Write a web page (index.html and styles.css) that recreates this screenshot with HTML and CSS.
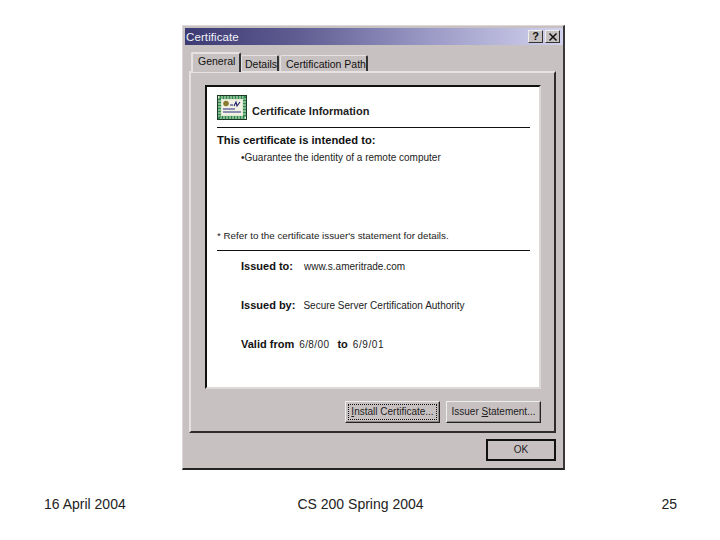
FILE: index.html
```html
<!DOCTYPE html>
<html lang="en">
<head>
<meta charset="utf-8">
<title>Certificate</title>
<link rel="stylesheet" href="styles.css">
</head>
<body>
<main class="slide">
  <section class="window">
    <header class="titlebar">
      <span class="title">Certificate</span>
      <span class="caption-buttons">
        <span class="caption-btn">?</span>
        <span class="caption-btn close">
          <svg viewBox="0 0 10 10" width="10" height="10"><path d="M1.5 1.5 8.5 8.5M8.5 1.5 1.5 8.5" stroke="#111" stroke-width="1.5" fill="none"/></svg>
        </span>
      </span>
    </header>
    <div class="tabs">
      <span class="tab active">General</span>
      <span class="tab details">Details</span>
      <span class="tab path">Certification Path</span>
    </div>
    <div class="panel">
      <div class="cert">
        <div class="cert-head">
          <svg class="cert-icon" viewBox="0 0 30 25" width="30" height="25">
            <rect x="0.5" y="0.5" width="29" height="24" fill="#dfe8d0" stroke="#1d3a26"/>
            <rect x="2.5" y="2.5" width="25" height="20" fill="none" stroke="#2f8a50" stroke-width="3" stroke-dasharray="2 1"/>
            <rect x="5" y="5" width="20" height="15" fill="#f1f2e4"/>
            <circle cx="9" cy="8.5" r="2.8" fill="#8a7a30"/>
            <path d="M13 10h3M17 11l2-4 1 4 3-4" stroke="#20206a" stroke-width="1.1" fill="none"/>
            <path d="M6 14h12M6 17h18" stroke="#2b2b80" stroke-width="1.1" fill="none"/>
          </svg>
          <span class="cert-title">Certificate Information</span>
        </div>
        <hr class="rule">
        <p class="intended">This certificate is intended to:</p>
        <p class="purpose"><span class="bullet">•</span>Guarantee the identity of a remote computer</p>
        <p class="note">* Refer to the certificate issuer's statement for details.</p>
        <hr class="rule rule-lower">
        <dl class="fields">
          <div class="field"><dt class="label">Issued to:</dt><dd class="value to">www.s.ameritrade.com</dd></div>
          <div class="field"><dt class="label">Issued by:</dt><dd class="value by">Secure Server Certification Authority</dd></div>
          <div class="field"><dt class="label">Valid from</dt><dd class="value from">6/8/00</dd><dt class="label until">to</dt><dd class="value until-date">6/9/01</dd></div>
        </dl>
      </div>
      <div class="panel-actions">
        <button class="btn focused" type="button"><span class="focus"><u>I</u>nstall Certificate...</span></button>
        <button class="btn" type="button">Issuer <u>S</u>tatement...</button>
      </div>
    </div>
    <div class="dialog-actions">
      <button class="btn ok" type="button">OK</button>
    </div>
  </section>
  <footer class="slide-footer">
    <span>16 April 2004</span>
    <span class="center">CS 200 Spring 2004</span>
    <span class="end">25</span>
  </footer>
</main>
</body>
</html>
```

FILE: styles.css
```css
* { box-sizing: border-box; }
html, body { margin: 0; padding: 0; background: #fff; }
body { font-family: "Liberation Sans", Arial, sans-serif; color: #111; }
.slide { width: 720px; height: 540px; display: flex; flex-direction: column; overflow: hidden; }

.window {
  width: 383px; height: 445px; margin: 25px 0 0 182px; padding: 2px 0 0 2px;
  background: #c8c1c1;
  border-top: 1px solid #dcd8d8; border-left: 1px solid #dcd8d8;
  border-right: 2px solid #3a3838; border-bottom: 2px solid #222;
  display: flex; flex-direction: column;
  font-size: 10.5px;
}
.titlebar {
  height: 17px; flex: none; display: flex; align-items: center; justify-content: space-between;
  padding: 0 2px 0 1px;
  background: linear-gradient(90deg, #3c3a72 0%, #5f5d92 30%, #9c9ac6 65%, #d2d2ee 100%);
}
.title { color: #f2f2f6; font-size: 11.5px; font-weight: 400; letter-spacing: .1px; }
.caption-buttons { display: flex; gap: 2px; margin-right: 1px; }
.caption-btn {
  width: 15px; height: 13px; display: flex; align-items: center; justify-content: center;
  background: #c8c1c1; font-size: 11px; font-weight: 700; line-height: 1;
  border: 1px solid; border-color: #eee #333 #333 #eee;
}

.tabs { display: flex; align-items: flex-end; height: 26px; padding-left: 5px; flex: none; position: relative; z-index: 1; }
.tab {
  height: 16px; padding: 2px 4px 0; margin-left: 1px;
  border-top: 1px solid #e6e2e2; border-left: 1px solid #e6e2e2; border-right: 2px solid #333;
  border-radius: 2px 2px 0 0; line-height: 13px; white-space: nowrap;
}
.tab.active { height: 20px; width: 50px; margin: 0 0 -1px 1px; padding: 1px 0 0 5px; background: #c8c1c1; border-top-width: 2px; border-left-width: 2px; }
.tab.details { width: 38px; padding-left: 3px; margin-left: 0; }
.tab.path { width: 88px; padding-left: 5px; }

.panel {
  margin-left: 4px; width: 367px; height: 362px; flex: none; padding: 12px 14px 0 14px;
  border-top: 2px solid #e6e2e2; border-left: 2px solid #e6e2e2;
  border-right: 2px solid #2e2c2c; border-bottom: 2px solid #2e2c2c;
  display: flex; flex-direction: column;
}
.cert {
  width: 336px; height: 304px; flex: none; background: #fff; padding: 8px 10px 0 10px;
  border-top: 2px solid #111; border-left: 2px solid #111;
  border-right: 2px solid #dcd8d8; border-bottom: 2px solid #dcd8d8;
}
.cert-head { display: flex; align-items: center; gap: 5px; height: 25px; }
.cert-icon { flex: none; }
.cert-title { font-size: 11px; font-weight: 700; padding-top: 7px; color: #222; }
.rule { margin: 7px 0 0; width: 313px; height: 1px; border: 0; background: #111; }
.rule-lower { margin-top: 8px; }
.intended { margin: 5px 0 0; font-size: 11.2px; font-weight: 700; line-height: 14px; }
.purpose { margin: 4px 0 0 24px; font-size: 10px; line-height: 13px; color: #222; white-space: nowrap; }
.bullet { margin-right: 0; }
.note { margin: 65px 0 0; font-size: 9.8px; line-height: 13px; color: #222; white-space: nowrap; }

.fields { margin: 8px 0 0 24px; padding: 0; }
.field { display: flex; align-items: center; height: 14px; margin-bottom: 25px; white-space: nowrap; }
.label { font-size: 11px; font-weight: 700; }
.value { margin: 0; font-size: 10px; color: #222; }
.value.to { margin-left: 11px; }
.value.by { margin-left: 8px; }
.value.from { margin-left: 5px; letter-spacing: .4px; }
.until { margin-left: 8px; }
.until-date { margin-left: 5px; letter-spacing: .6px; }

.panel-actions { display: flex; justify-content: flex-end; gap: 6px; margin: 12px -1px 0 0; }
.btn {
  width: 95px; height: 22px; padding: 0 0 1px; background: #c8c1c1; color: #222;
  font: 400 10px "Liberation Sans", Arial, sans-serif;
  border: 1px solid; border-color: #eee #222 #222 #eee;
  box-shadow: inset -1px -1px 0 #8e8888;
}
.btn.focused { padding: 2px; }
.focus { display: flex; align-items: center; justify-content: center; height: 100%; padding-bottom: 1px; outline: 1px dotted #111; outline-offset: -1px; }
.dialog-actions { display: flex; justify-content: flex-end; padding: 6px 7px 0 0; }
.btn.ok { width: 70px; height: 22px; border: 2px solid #111; box-shadow: none; padding-left: 0; }

.slide-footer {
  display: grid; grid-template-columns: 1fr auto 1fr; align-items: center;
  padding: 0 43px 0 44px; margin-top: 24px; font-size: 14px; line-height: 20px; color: #222;
}
.end { text-align: right; }
```
